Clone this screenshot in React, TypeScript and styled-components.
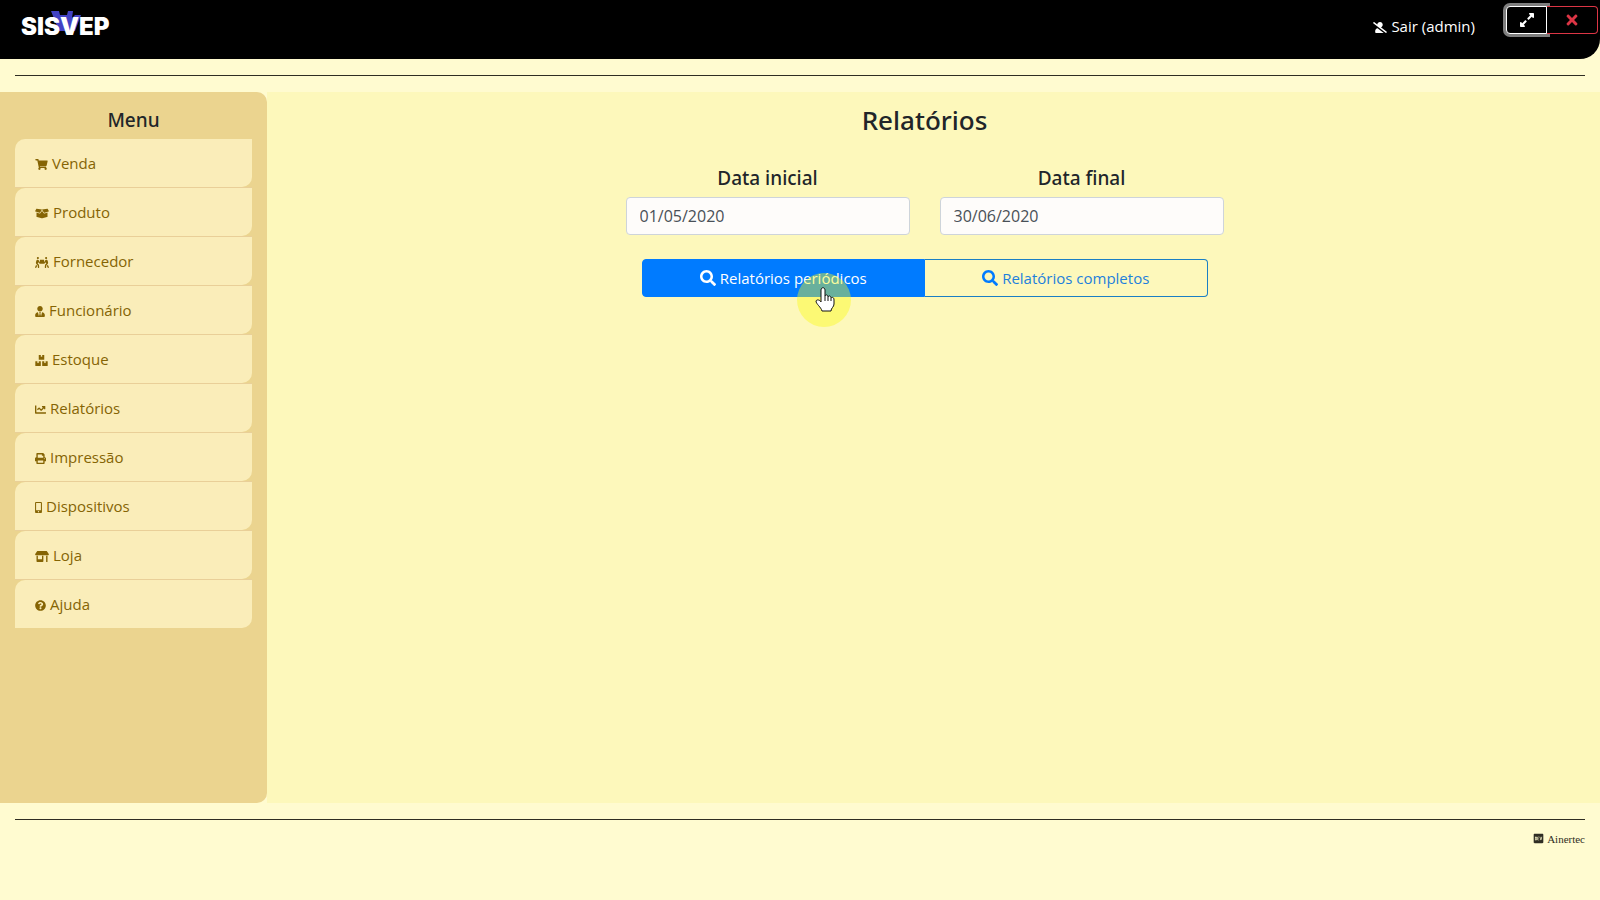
import React from "react";
import styled, { createGlobalStyle } from "styled-components";
import {
  FaUserSlash, FaExpandAlt, FaTimes, FaShoppingCart, FaBoxOpen, FaPeopleCarry, FaUserTie,
  FaBoxes, FaChartLine, FaPrint, FaMobileAlt, FaStoreAlt, FaQuestionCircle, FaSearch, FaDev,
} from "react-icons/fa";

const GlobalStyle = createGlobalStyle`
  *, *::before, *::after { box-sizing: border-box; }
  body {
    margin: 0;
    background: #fffbd0;
    color: #212529;
    font-family: "Open Sans", "Noto Sans", sans-serif;
    font-size: 15px;
    line-height: 24px;
  }
`;

const TopBar = styled.header`
  display: flex;
  justify-content: space-between;
  align-items: flex-start;
  height: 59px;
  background: #000;
  border-bottom-right-radius: 20px;
`;

const Brand = styled.a`
  display: block;
  margin: 8px 0 0 20px;
  line-height: 0;
`;

const TopActions = styled.div`
  display: flex;
  align-items: flex-start;
  gap: 31px;
  padding: 6px 2px 0 0;
`;

const Glyph = styled.span<{ $width: number }>`
  display: flex;
  flex: none;
  width: ${(p) => p.$width}px;
  margin-top: 3px;
  svg { width: 100%; height: 11px; }
`;

const LogoutLink = styled.a`
  display: flex;
  align-items: center;
  gap: 4px;
  margin-top: 8px;
  color: #fff;
  text-decoration: none;
`;

const WindowButtons = styled.div`
  display: flex;
`;

const WindowButton = styled.button<{ $tone: string; $focused?: boolean }>`
  display: flex;
  align-items: center;
  justify-content: center;
  width: ${(p) => (p.$focused ? 41 : 51)}px;
  height: 28px;
  padding: 0;
  border: 1px solid ${(p) => p.$tone};
  border-radius: ${(p) => (p.$focused ? "4px 0 0 4px" : "0 4px 4px 0")};
  border-left-width: ${(p) => (p.$focused ? 1 : 0)}px;
  box-shadow: ${(p) => (p.$focused ? "0 0 0 3px #7e7e7e" : "none")};
  background: #000;
  color: ${(p) => p.$tone};
  font-size: 16px;
`;

const Rule = styled.hr`
  margin: 16px 15px;
  border: 0;
  border-top: 1px solid #2f2d23;
`;

const Body = styled.div`
  display: flex;
  align-items: stretch;
  min-height: 711px;
`;

const Sidebar = styled.nav`
  flex: 0 0 267px;
  padding: 16px 15px;
  background: #ebd48f;
  border-radius: 0 10px 10px 0;
`;

const SmallHeading = styled.h2`
  margin: 0 0 7px;
  font-family: "Noto Sans", sans-serif;
  font-size: 19px;
  font-weight: 500;
  line-height: 24px;
  text-align: center;
`;

const MenuList = styled.ul`
  margin: 0;
  padding: 0;
  list-style: none;
`;

const MenuItem = styled.li`
  border-bottom: 1px solid #e9cf98;
  &:last-child { border-bottom: 0; }
`;

const MenuLink = styled.a`
  display: flex;
  align-items: center;
  gap: 4px;
  height: 48px;
  padding: 0 20px;
  border-radius: 10px 0 10px 0;
  background: #faedb9;
  color: #856404;
  text-decoration: none;
`;

const Content = styled.main`
  flex: 1;
  padding: 10px 33px 10px 15px;
  background: #fdf8bb;
`;

const PageTitle = styled.h1`
  margin: 0 0 28px;
  font-family: "Noto Sans", sans-serif;
  font-size: 26px;
  font-weight: 500;
  line-height: 36px;
  text-align: center;
`;

const ReportForm = styled.form`
  max-width: 598px;
  margin: 0 auto;
`;

const DateFields = styled.div`
  display: grid;
  grid-template-columns: 1fr 1fr;
  gap: 30px;
`;

const FieldLabel = styled.label`
  display: block;
  margin-bottom: 7px;
  font-family: "Noto Sans", sans-serif;
  font-size: 19px;
  font-weight: 500;
  text-align: center;
`;

const DateInput = styled.input`
  display: block;
  width: 100%;
  height: 38px;
  padding: 0 13px;
  border: 1px solid #ced4da;
  border-radius: 4px;
  background: #fefcfa;
  color: #495057;
  font: inherit;
  font-size: 16px;
`;

const ButtonGroup = styled.div`
  position: relative;
  display: flex;
  margin: 24px 16px 0;
`;

const ReportButton = styled.button<{ $active?: boolean }>`
  flex: 1;
  display: flex;
  align-items: center;
  justify-content: center;
  gap: 4px;
  height: 38px;
  padding: 0;
  border: 1px solid ${(p) => (p.$active ? "#007bff" : "#1b7fc4")};
  border-left-width: ${(p) => (p.$active ? 1 : 0)}px;
  border-radius: ${(p) => (p.$active ? "4px 0 0 4px" : "0 4px 4px 0")};
  background: ${(p) => (p.$active ? "#007bff" : "transparent")};
  color: ${(p) => (p.$active ? "#fff" : "#1d80dc")};
  font: inherit;
  svg { width: 16px; height: 16px; color: ${(p) => (p.$active ? "#fff" : "#007bff")}; }
`;

const Pointer = styled.svg`
  position: absolute;
  left: 154px;
  top: 13px;
  pointer-events: none;
`;

const Footer = styled.footer`
  display: flex;
  align-items: center;
  justify-content: flex-end;
  gap: 3px;
  margin: -3px 15px 0;
  padding-bottom: 16px;
  color: #2f2d23;
  font-family: "Liberation Serif", serif;
  font-size: 11px;
  line-height: 10px;
`;

const menu = [
  { label: "Venda", Icon: FaShoppingCart, width: 13 },
  { label: "Produto", Icon: FaBoxOpen, width: 14 },
  { label: "Fornecedor", Icon: FaPeopleCarry, width: 14 },
  { label: "Funcionário", Icon: FaUserTie, width: 10 },
  { label: "Estoque", Icon: FaBoxes, width: 13 },
  { label: "Relatórios", Icon: FaChartLine, width: 11 },
  { label: "Impressão", Icon: FaPrint, width: 11 },
  { label: "Dispositivos", Icon: FaMobileAlt, width: 7 },
  { label: "Loja", Icon: FaStoreAlt, width: 14 },
  { label: "Ajuda", Icon: FaQuestionCircle, width: 11 },
];

const Logo = () => (
  <svg width="110" height="40" viewBox="0 0 110 40" role="img" aria-label="SISVEP">
    <path d="M31 3h8l1 4h7l1-4h5l-1 7 3-3h6l-6 16H39z" fill="#4242c4" />
    <path d="M42 10h3l-2 4z" fill="#000" />
    <text x="1" y="27" fill="#fff" fontFamily="Inter, sans-serif" fontWeight="900" fontSize="24">SISVEP</text>
  </svg>
);

export default function App() {
  return (
    <>
      <GlobalStyle />
      <TopBar>
        <Brand href="#"><Logo /></Brand>
        <TopActions>
          <LogoutLink href="#"><Glyph $width={14}><FaUserSlash /></Glyph>Sair (admin)</LogoutLink>
          <WindowButtons>
            <WindowButton type="button" $tone="#fff" $focused aria-label="Expandir"><FaExpandAlt /></WindowButton>
            <WindowButton type="button" $tone="#dc3545" aria-label="Fechar"><FaTimes /></WindowButton>
          </WindowButtons>
        </TopActions>
      </TopBar>
      <Rule />
      <Body>
        <Sidebar>
          <SmallHeading>Menu</SmallHeading>
          <MenuList>
            {menu.map(({ label, Icon, width }) => (
              <MenuItem key={label}>
                <MenuLink href="#"><Glyph $width={width}><Icon /></Glyph>{label}</MenuLink>
              </MenuItem>
            ))}
          </MenuList>
        </Sidebar>
        <Content>
          <PageTitle>Relatórios</PageTitle>
          <ReportForm>
            <DateFields>
              <div>
                <FieldLabel htmlFor="start">Data inicial</FieldLabel>
                <DateInput id="start" type="text" defaultValue="01/05/2020" />
              </div>
              <div>
                <FieldLabel htmlFor="end">Data final</FieldLabel>
                <DateInput id="end" type="text" defaultValue="30/06/2020" />
              </div>
            </DateFields>
            <ButtonGroup>
              <ReportButton type="button" $active><FaSearch />Relatórios periódicos</ReportButton>
              <ReportButton type="button"><FaSearch />Relatórios completos</ReportButton>
              <Pointer width="56" height="56" viewBox="0 0 56 56" aria-hidden="true">
                <circle cx="28" cy="28" r="27" fill="#fbfb14" fillOpacity="0.42" />
                <path d="M25 27V18c0-3 4-3 4 0v6c1-2 3-1 3 1 1-2 3-1 3 1 1-1 3-1 3 2v4c0 3-3 4-3 7h-9c-1-4-6-7-6-10 1-2 4-1 5 1z" fill="#fff" stroke="#111" strokeWidth="1" />
                <path d="M29 24v5M32 25v4M35 26v3" fill="none" stroke="#111" />
              </Pointer>
            </ButtonGroup>
          </ReportForm>
        </Content>
      </Body>
      <Rule />
      <Footer><FaDev />Ainertec</Footer>
    </>
  );
}
